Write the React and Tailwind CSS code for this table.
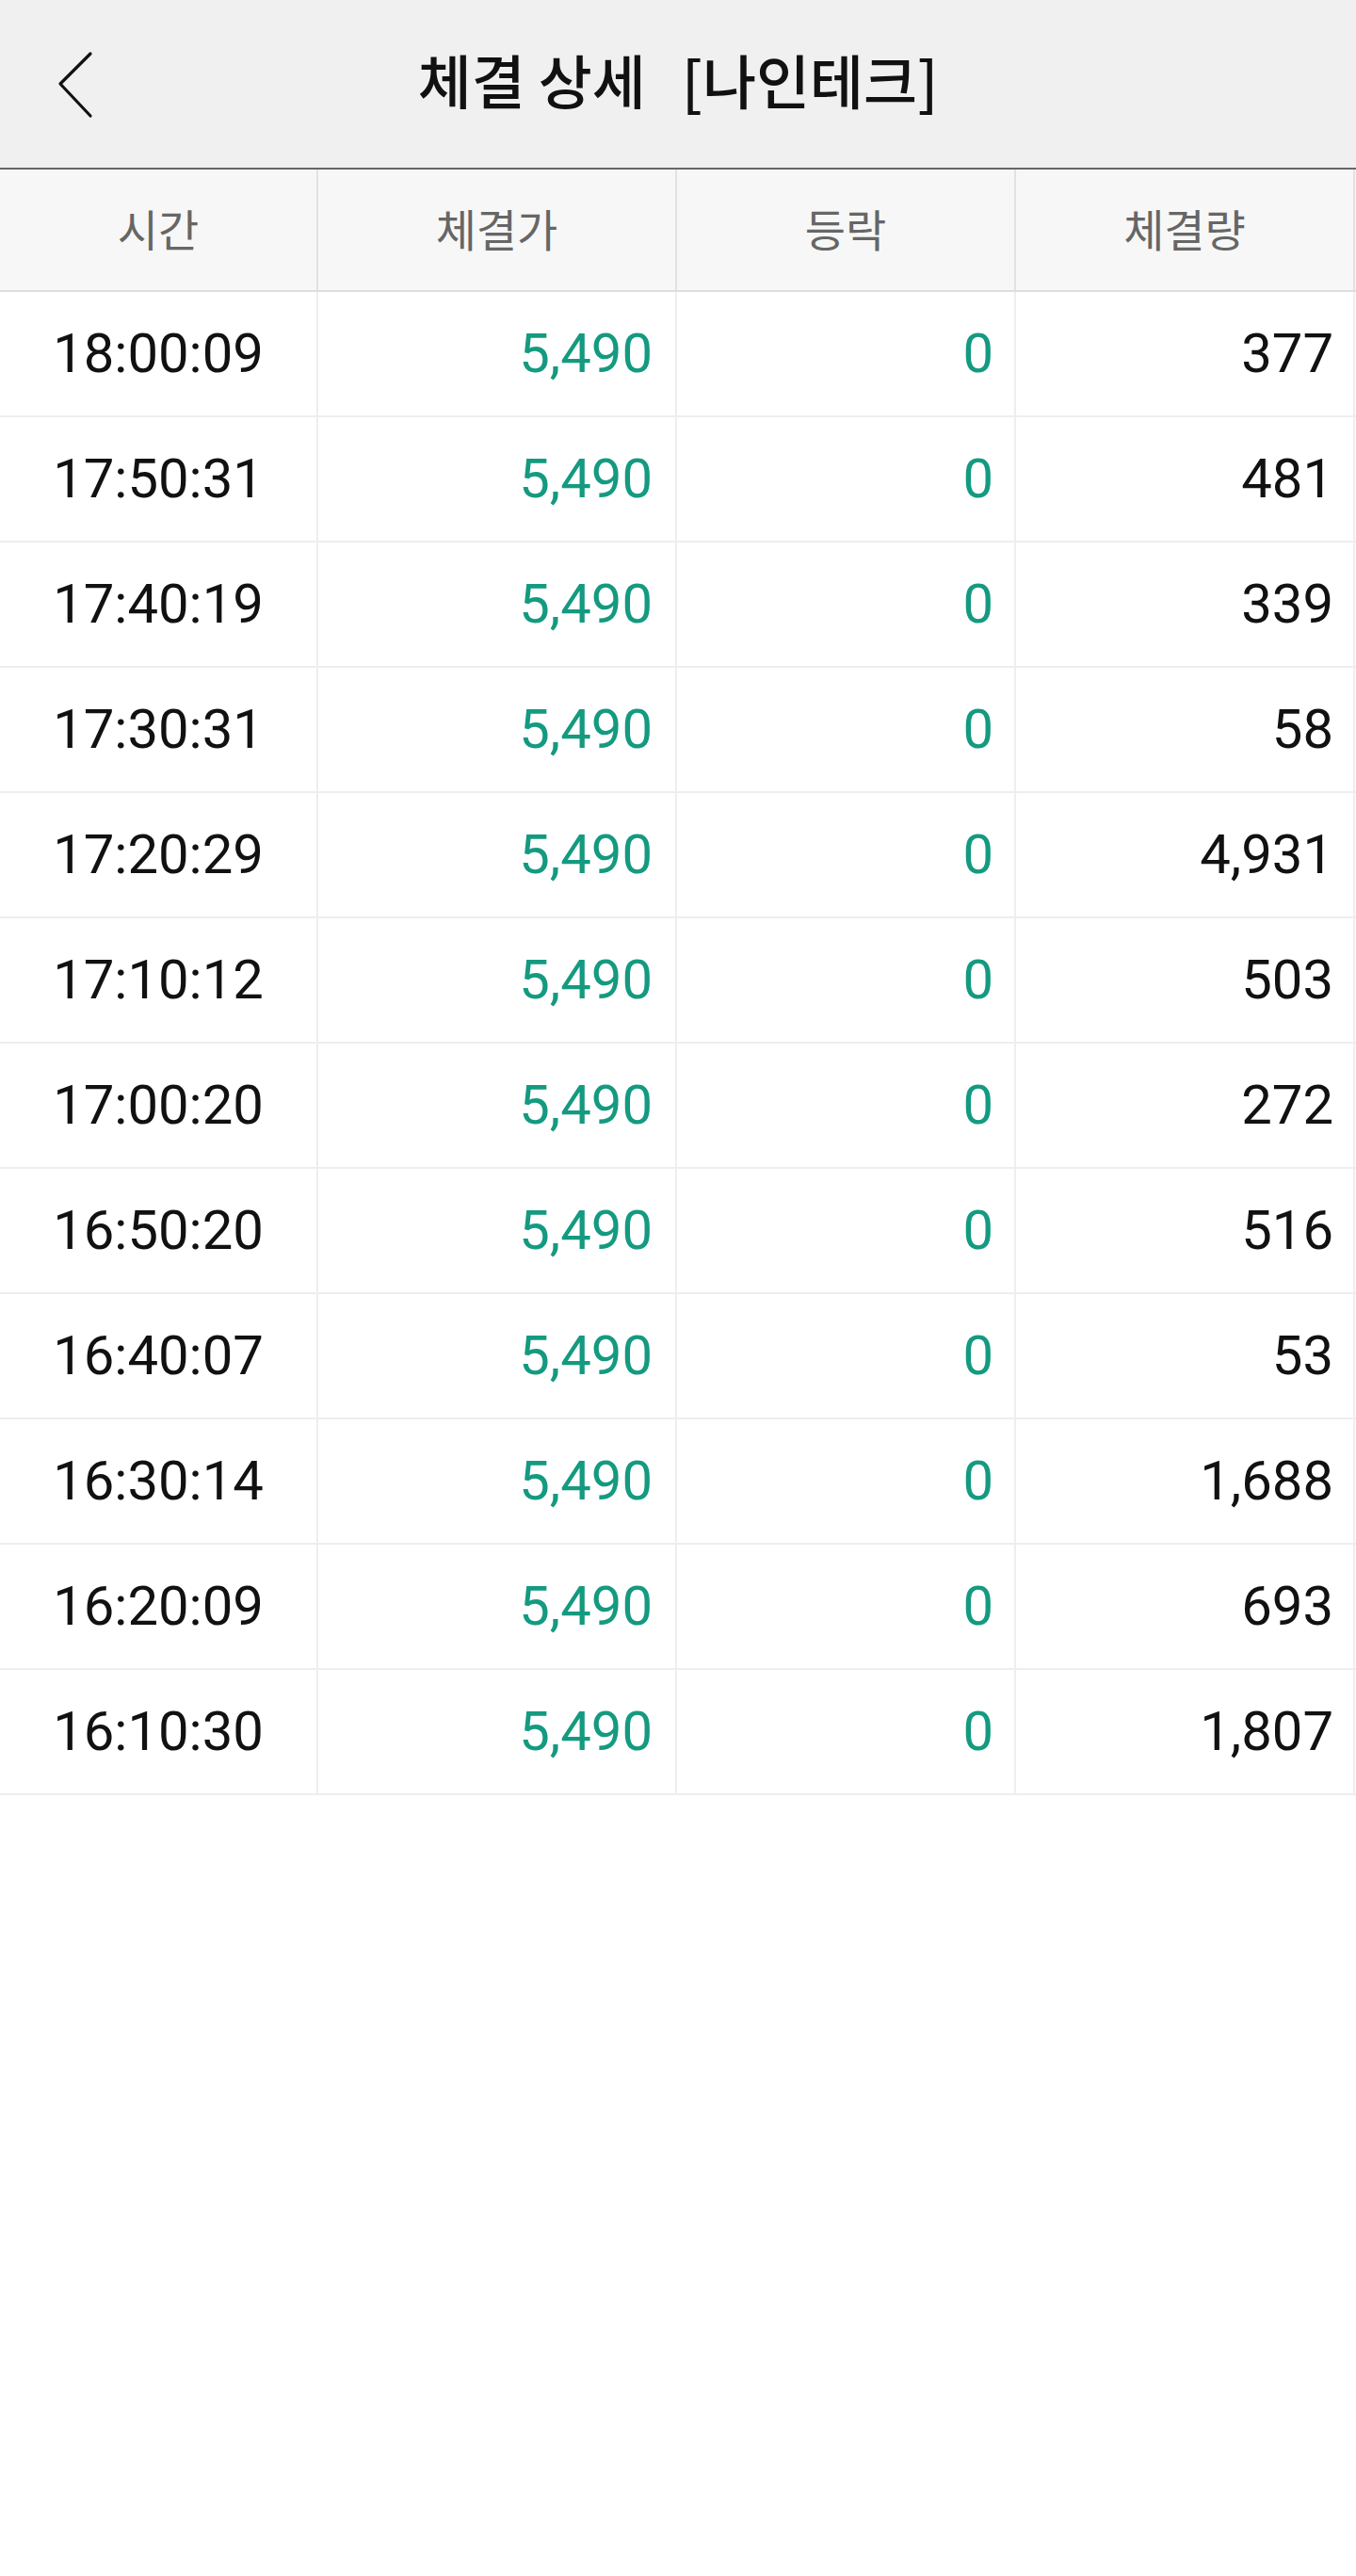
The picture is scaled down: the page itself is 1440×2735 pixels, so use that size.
import React from 'react';

const rows = [
  ['18:00:09', '5,490', '0', '377'],
  ['17:50:31', '5,490', '0', '481'],
  ['17:40:19', '5,490', '0', '339'],
  ['17:30:31', '5,490', '0', '58'],
  ['17:20:29', '5,490', '0', '4,931'],
  ['17:10:12', '5,490', '0', '503'],
  ['17:00:20', '5,490', '0', '272'],
  ['16:50:20', '5,490', '0', '516'],
  ['16:40:07', '5,490', '0', '53'],
  ['16:30:14', '5,490', '0', '1,688'],
  ['16:20:09', '5,490', '0', '693'],
  ['16:10:30', '5,490', '0', '1,807'],
];

const cols = 'grid grid-cols-[338px_381px_360px_360px]';

const App = () => {
  return (
    <div
      className="w-[1440px] min-h-[2735px] bg-white"
      style={{ fontFamily: 'Roboto, "Noto Sans CJK KR", sans-serif' }}
    >
      {/* Top bar */}
      <div className="relative h-[180px] bg-[#f0f0f0] border-b-2 border-[#666666] flex items-center justify-center">
        <button className="absolute left-[56px] top-[50px] w-[48px] h-[80px] flex items-center justify-center">
          <svg width="44" height="76" viewBox="0 0 44 76" fill="none">
            <path d="M38 5 L6 37 L38 71" stroke="#111" strokeWidth="3.2" strokeLinecap="round" strokeLinejoin="round" />
          </svg>
        </button>
        <h1
          className="text-[62px] font-medium text-[#111] whitespace-pre pb-[10px]"
          style={{ fontFamily: '"Noto Sans CJK KR", sans-serif' }}
        >
          체결 상세<span className="ml-[38px]">[나인테크]</span>
        </h1>
      </div>

      {/* Column header */}
      <div className={`${cols} h-[130px] bg-[#f7f7f7] border-b-2 border-[#dddddd]`}>
        {['시간', '체결가', '등락', '체결량'].map((label) => (
          <div
            key={label}
            className="flex items-center justify-center border-r-2 border-[#e2e2e2] text-[47px] text-[#666666] pb-[4px]"
            style={{ fontFamily: '"Noto Sans CJK KR", sans-serif' }}
          >
            {label}
          </div>
        ))}
      </div>

      {/* Rows */}
      {rows.map(([time, price, change, vol]) => (
        <div key={time} className={`${cols} h-[133px] border-b-2 border-[#eeeeee] text-[58px]`}>
          <div className="flex items-center justify-center border-r-2 border-[#eeeeee] text-[#111]">{time}</div>
          <div className="flex items-center justify-end pr-[24px] border-r-2 border-[#eeeeee] text-[#149a80]">{price}</div>
          <div className="flex items-center justify-end pr-[22px] border-r-2 border-[#eeeeee] text-[#149a80]">{change}</div>
          <div className="flex items-center justify-end pr-[21px] border-r-2 border-[#eeeeee] text-[#111]">{vol}</div>
        </div>
      ))}
    </div>
  );
};

export default App;
